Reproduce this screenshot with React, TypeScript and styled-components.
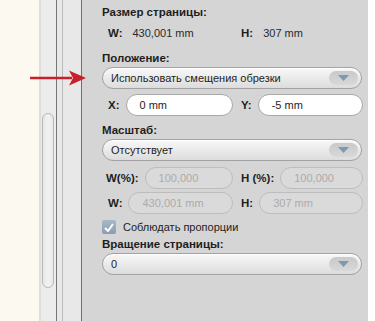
import React from 'react'
import styled, { createGlobalStyle } from 'styled-components'

const GlobalStyle = createGlobalStyle`
  html, body {
    margin: 0;
    padding: 0;
    background: #ffffff;
  }
  body {
    font-family: 'Liberation Sans', Arial, sans-serif;
  }
`

const Screen = styled.div`
  position: relative;
  width: 375px;
  height: 321px;
  display: flex;
  overflow: hidden;
  background: #ffffff;
`

const Canvas = styled.div`
  width: 39px;
  background: #fcf9f1;
`

const ScrollTrack = styled.div`
  width: 15px;
  border-left: 2px solid #dedede;
  background: #ececec;
  display: flex;
  flex-direction: column;
  padding-top: 113px;
  box-sizing: content-box;
`

const Thumb = styled.div`
  width: 12px;
  height: 175px;
  margin-left: 1px;
  border: 1px solid #b8b8b8;
  border-radius: 7px;
  box-sizing: border-box;
  background: linear-gradient(to right, #e6e6e6, #f2f2f2 50%, #e8e8e8);
`

const Divider = styled.div<{ $w: number; $line: string }>`
  width: ${p => p.$w}px;
  border-left: 1px solid ${p => p.$line};
  background: #e8e8e8;
`

const Panel = styled.div`
  width: 287px;
  background: #d5d5d5;
  border-left: 1px solid #6e6e6e;
  padding: 5px 6px 0 20px;
  box-sizing: border-box;
  display: flex;
  flex-direction: column;
  color: #1e1e1e;
  font-size: 11px;
`

const SectionTitle = styled.div<{ $top?: number }>`
  font-weight: 700;
  font-size: 11.5px;
  line-height: 15px;
  margin-top: ${p => p.$top ?? 0}px;
  margin-bottom: 1px;
`

const Grid = styled.div<{ $top?: number }>`
  display: grid;
  grid-template-columns: 131px 122px;
  column-gap: 8px;
  margin-top: ${p => p.$top ?? 0}px;
`

const Field = styled.div<{ $indent?: number }>`
  display: flex;
  align-items: center;
  height: 22px;
  padding-left: ${p => p.$indent ?? 0}px;
  gap: 6px;
`

const Label = styled.span`
  font-weight: 700;
  font-size: 11.5px;
  white-space: nowrap;
`

const Value = styled.span`
  color: #2a2a2a;
  margin-left: 4px;
`

const Input = styled.div<{ $disabled?: boolean }>`
  flex: 1;
  height: 22px;
  box-sizing: border-box;
  border-radius: 11px;
  border: 1px solid ${p => (p.$disabled ? '#bdbdbd' : '#a9a9a9')};
  background: ${p => (p.$disabled ? '#dadada' : '#ffffff')};
  color: ${p => (p.$disabled ? '#ababab' : '#1e1e1e')};
  padding-left: 13px;
  display: flex;
  align-items: center;
`

const Select = styled.div`
  height: 22px;
  box-sizing: border-box;
  border-radius: 11px;
  border: 1px solid #a2a2a2;
  background: linear-gradient(to bottom, #f8f8f8, #e9e9e9 55%, #dcdcdc);
  box-shadow: inset 0 1px 0 #ffffff;
  display: flex;
  align-items: center;
  justify-content: space-between;
  padding: 0 3px 0 8px;
`

const SelectButton = styled.div`
  width: 29px;
  height: 14px;
  border-radius: 7px;
  background: linear-gradient(to bottom, #c9c9c9, #d8d8d8);
  display: flex;
  align-items: center;
  justify-content: center;
`

const Check = styled.div`
  display: flex;
  align-items: center;
  gap: 7px;
  height: 16px;
  margin-top: 5px;
`

const Box = styled.div`
  width: 14px;
  height: 14px;
  border-radius: 2px;
  background: linear-gradient(to bottom, #a9b8c7, #8a9db0);
  display: flex;
  align-items: center;
  justify-content: center;
`

const Pointer = styled.svg`
  position: absolute;
  left: 28px;
  top: 70px;
`

const Arrow = () => (
  <SelectButton>
    <svg width="11" height="6" viewBox="0 0 11 6">
      <path d="M0 0 H11 L5.5 6 Z" fill="#7d98b1" />
    </svg>
  </SelectButton>
)

const Dropdown: React.FC<{ value: string }> = ({ value }) => (
  <Select>
    <span>{value}</span>
    <Arrow />
  </Select>
)

export default function App() {
  return (
    <>
      <GlobalStyle />
      <Screen>
        <Canvas />
        <ScrollTrack>
          <Thumb />
        </ScrollTrack>
        <Divider $w={5} $line="#767676" />
        <Divider $w={18} $line="#b9b9b9" />
        <Panel>
          <SectionTitle>Размер страницы:</SectionTitle>
          <Grid $top={1}>
            <Field $indent={6}>
              <Label>W:</Label>
              <Value>430,001 mm</Value>
            </Field>
            <Field>
              <Label>H:</Label>
              <Value>307 mm</Value>
            </Field>
          </Grid>
          <SectionTitle $top={7}>Положение:</SectionTitle>
          <Dropdown value="Использовать смещения обрезки" />
          <Grid $top={5}>
            <Field $indent={6}>
              <Label>X:</Label>
              <Input>0 mm</Input>
            </Field>
            <Field>
              <Label>Y:</Label>
              <Input>-5 mm</Input>
            </Field>
          </Grid>
          <SectionTitle $top={7}>Масштаб:</SectionTitle>
          <Dropdown value="Отсутствует" />
          <Grid $top={6}>
            <Field $indent={4}>
              <Label>W(%):</Label>
              <Input $disabled>100,000</Input>
            </Field>
            <Field>
              <Label>H (%):</Label>
              <Input $disabled>100,000</Input>
            </Field>
          </Grid>
          <Grid $top={3}>
            <Field $indent={6}>
              <Label>W:</Label>
              <Input $disabled>430,001 mm</Input>
            </Field>
            <Field>
              <Label>H:</Label>
              <Input $disabled>307 mm</Input>
            </Field>
          </Grid>
          <Check>
            <Box>
              <svg width="10" height="9" viewBox="0 0 10 9">
                <path d="M1 5 L4 8 L9 1" stroke="#ffffff" strokeWidth="2" fill="none" />
              </svg>
            </Box>
            <span>Соблюдать пропорции</span>
          </Check>
          <SectionTitle $top={2}>Вращение страницы:</SectionTitle>
          <Dropdown value="0" />
        </Panel>
        <Pointer width="60" height="18" viewBox="0 0 60 18">
          <path d="M2 8 H44" stroke="#c8202a" strokeWidth="2.4" />
          <path d="M41 0.5 L58 8 L41 15.5 L45 8 Z" fill="#c8202a" />
        </Pointer>
      </Screen>
    </>
  )
}
